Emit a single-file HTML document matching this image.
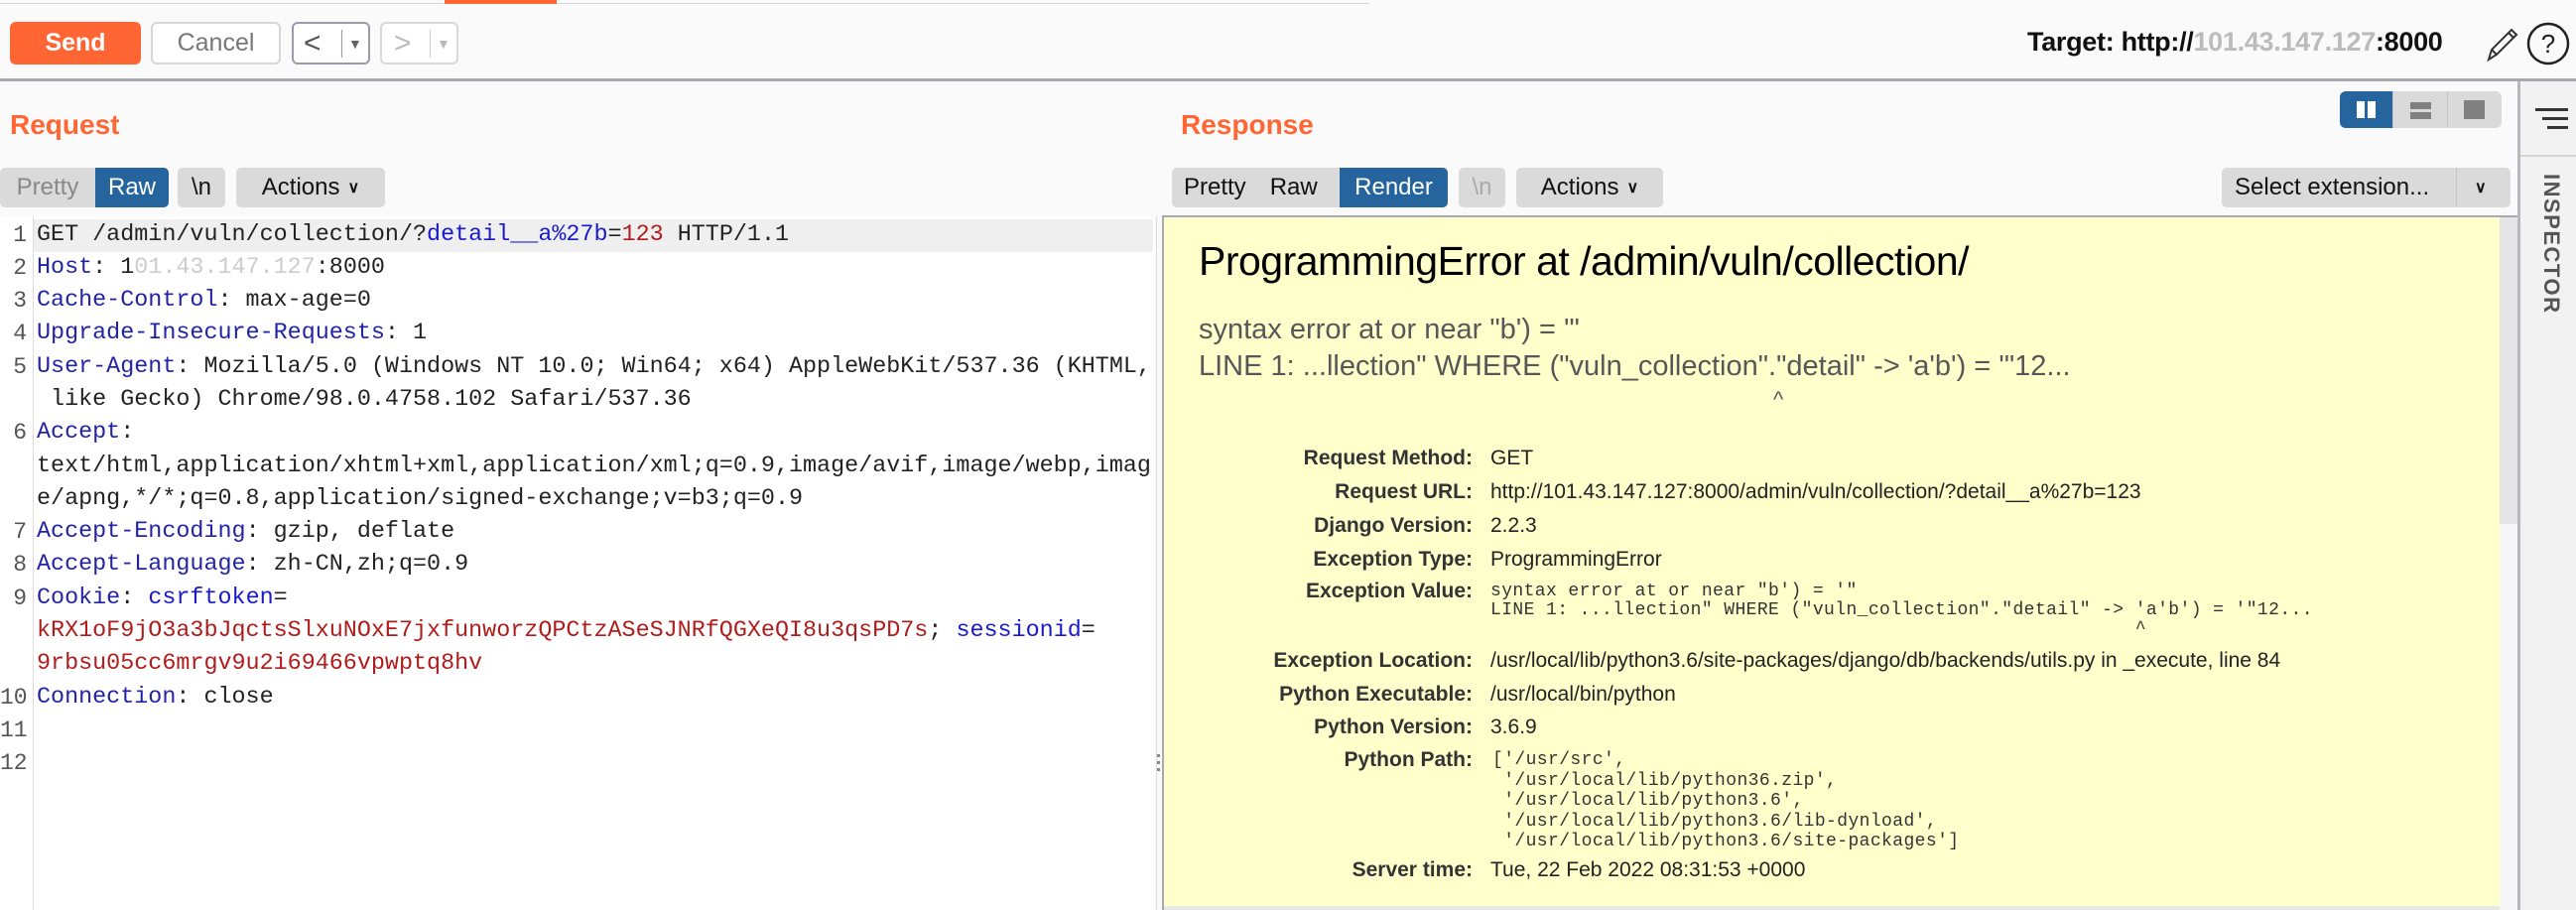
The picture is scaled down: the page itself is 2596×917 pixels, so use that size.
<!DOCTYPE html>
<html><head><meta charset="utf-8"><style>
*{margin:0;padding:0;box-sizing:border-box}
body{width:2596px;height:917px;background:#fafafa;position:relative;overflow:hidden;font-family:"Liberation Sans",Arial,sans-serif}
.a{position:absolute}
.btn{position:absolute;border-radius:6px;display:flex;align-items:center;justify-content:center;font-size:25px}
.tab{position:absolute;top:169px;height:40px;display:flex;align-items:center;font-size:24px;color:#111}
.mono{font-family:"Liberation Mono",monospace;font-size:23.4px;white-space:pre;color:#222}
.ln{position:absolute;left:0;width:33px;text-align:right;padding-right:6px;color:#555;font-family:"Liberation Mono",monospace;font-size:23px}
.k{color:#2323a8}.r{color:#b01c1c}.b{color:#1a1acc}
.row{position:absolute;left:37px;height:33px;line-height:33px}
.lab{position:absolute;width:300px;left:1184px;text-align:right;font-size:21px;color:#333;font-weight:bold}
.val{position:absolute;left:1502px;font-size:21px;color:#222;white-space:pre}
.sm{font-family:"Liberation Mono",monospace;font-size:18px;letter-spacing:0.4px;color:#333;white-space:pre}
</style></head><body>
<div class="a" style="left:0;top:3px;width:1380px;height:1px;background:#d8d8d8"></div>
<div class="a" style="left:448px;top:0;width:113px;height:4px;background:#ff6633"></div>
<div class="btn" style="left:10px;top:22px;width:132px;height:43px;background:#ff6633;color:#fff;font-weight:bold">Send</div>
<div class="btn" style="left:152px;top:22px;width:131px;height:43px;background:#fff;border:2px solid #d6d6d6;color:#777">Cancel</div>
<div class="btn" style="left:294px;top:22px;width:79px;height:43px;background:#fff;border:2px solid #9a9aaa;color:#555;justify-content:flex-start">
 <span style="margin-left:10px;font-size:30px">&lt;</span><span style="position:absolute;left:48px;top:6px;width:1px;height:28px;background:#999"></span><span style="position:absolute;left:55px;font-size:14px;color:#666">▼</span></div>
<div class="btn" style="left:383px;top:22px;width:79px;height:43px;background:#fff;border:2px solid #d8d8d8;color:#bbb;justify-content:flex-start">
 <span style="margin-left:12px;font-size:30px">&gt;</span><span style="position:absolute;left:48px;top:6px;width:1px;height:28px;background:#ccc"></span><span style="position:absolute;left:55px;font-size:14px;color:#bbb">▼</span></div>
<div class="a" style="left:2043px;top:27px;font-size:27px;font-weight:bold;color:#111;white-space:nowrap;letter-spacing:-0.3px">Target: http://<span style="color:#bbb">101.43.147.127</span>:8000</div>
<svg class="a" style="left:2498px;top:22px" width="44" height="44" viewBox="0 0 44 44"><path d="M10 38 L13 28 L33 8 L38 13 L18 33 Z M13 28 L18 33 M30 11 L35 16" fill="none" stroke="#333" stroke-width="2"/></svg>
<svg class="a" style="left:2545px;top:21px" width="46" height="46" viewBox="0 0 46 46"><circle cx="23" cy="23" r="20" fill="none" stroke="#222" stroke-width="2.5"/><text x="23" y="32" font-size="26" text-anchor="middle" font-family="Liberation Sans" fill="#222">?</text></svg>
<div class="a" style="left:0;top:79px;width:2596px;height:3px;background:#a9a7ae"></div>
<div class="a" style="left:2537px;top:82px;width:59px;height:835px;background:#f3f2f3;border-left:3px solid #b9b7bc"></div>
<div class="a" style="left:2540px;top:156px;width:56px;height:2px;background:#d4d4d4"></div>
<div class="a" style="left:2555px;top:109px;width:33px;height:3px;background:#333"></div>
<div class="a" style="left:2562px;top:118px;width:26px;height:3px;background:#333"></div>
<div class="a" style="left:2567px;top:127px;width:21px;height:3px;background:#333"></div>
<div class="a" style="left:2560px;top:175px;width:24px;height:165px"><div style="position:absolute;left:24px;top:0;transform-origin:0 0;transform:rotate(90deg);font-size:22px;font-weight:bold;color:#555;letter-spacing:1.5px;white-space:nowrap">INSPECTOR</div></div>
<div class="a" style="left:10px;top:110px;font-size:28px;font-weight:bold;color:#ff6633">Request</div>
<div class="tab" style="left:0;width:96px;background:#dadada;border-radius:5px 0 0 5px;color:#888;justify-content:center">Pretty</div>
<div class="tab" style="left:96px;width:74px;background:#26649d;color:#fff;border-radius:0 5px 5px 0;justify-content:center">Raw</div>
<div class="tab" style="left:179px;width:48px;background:#dadada;border-radius:5px;justify-content:center">\n</div>
<div class="tab" style="left:238px;width:150px;background:#dadada;border-radius:5px;justify-content:center">Actions <span style="margin-left:8px;font-size:16px;font-weight:bold">&#8744;</span></div>
<div class="a" style="left:0;top:218px;width:1164px;height:699px;background:#fff"></div>
<div class="a" style="left:33px;top:218px;width:1px;height:699px;background:#ddd"></div>
<div class="a" style="left:34px;top:221px;width:1128px;height:33px;background:#efefef"></div>
<div class="ln" style="top:221px;line-height:33px">1</div>
<div class="ln" style="top:254px;line-height:33px">2</div>
<div class="ln" style="top:287px;line-height:33px">3</div>
<div class="ln" style="top:320px;line-height:33px">4</div>
<div class="ln" style="top:354px;line-height:33px">5</div>
<div class="ln" style="top:420px;line-height:33px">6</div>
<div class="ln" style="top:520px;line-height:33px">7</div>
<div class="ln" style="top:553px;line-height:33px">8</div>
<div class="ln" style="top:587px;line-height:33px">9</div>
<div class="ln" style="top:687px;line-height:33px">10</div>
<div class="ln" style="top:720px;line-height:33px">11</div>
<div class="ln" style="top:753px;line-height:33px">12</div>
<div class="mono row" style="top:221px">GET /admin/vuln/collection/?<span class="b">detail__a%27b</span>=<span class="r">123</span> HTTP/1.1</div>
<div class="mono row" style="top:254px"><span class="k">Host</span>: 1<span style="color:#ccc">01.43.147.127</span>:8000</div>
<div class="mono row" style="top:287px"><span class="k">Cache-Control</span>: max-age=0</div>
<div class="mono row" style="top:320px"><span class="k">Upgrade-Insecure-Requests</span>: 1</div>
<div class="mono row" style="top:354px"><span class="k">User-Agent</span>: Mozilla/5.0 (Windows NT 10.0; Win64; x64) AppleWebKit/537.36 (KHTML,</div>
<div class="mono row" style="top:387px"> like Gecko) Chrome/98.0.4758.102 Safari/537.36</div>
<div class="mono row" style="top:420px"><span class="k">Accept</span>:</div>
<div class="mono row" style="top:454px">text/html,application/xhtml+xml,application/xml;q=0.9,image/avif,image/webp,imag</div>
<div class="mono row" style="top:487px">e/apng,*/*;q=0.8,application/signed-exchange;v=b3;q=0.9</div>
<div class="mono row" style="top:520px"><span class="k">Accept-Encoding</span>: gzip, deflate</div>
<div class="mono row" style="top:553px"><span class="k">Accept-Language</span>: zh-CN,zh;q=0.9</div>
<div class="mono row" style="top:587px"><span class="k">Cookie</span>: <span class="b">csrftoken</span>=</div>
<div class="mono row" style="top:620px"><span class="r">kRX1oF9jO3a3bJqctsSlxuNOxE7jxfunworzQPCtzASeSJNRfQGXeQI8u3qsPD7s</span>; <span class="b">sessionid</span>=</div>
<div class="mono row" style="top:653px"><span class="r">9rbsu05cc6mrgv9u2i69466vpwptq8hv</span></div>
<div class="mono row" style="top:687px"><span class="k">Connection</span>: close</div>
<div class="a" style="left:1165px;top:218px;width:1px;height:699px;background:#ddd"></div>
<div class="a" style="left:1166px;top:760px;width:3px;height:3px;background:#888;box-shadow:0 7px 0 #888,0 14px 0 #888"></div>
<div class="a" style="left:1190px;top:110px;font-size:28px;font-weight:bold;color:#ff6633">Response</div>
<div class="a" style="left:2358px;top:92px;width:163px;height:37px;background:#dadada;border-radius:6px"></div>
<div class="a" style="left:2358px;top:92px;width:53px;height:37px;background:#26649d;border-radius:6px 0 0 6px"></div>
<div class="a" style="left:2375px;top:102px;width:8px;height:17px;background:#fff"></div>
<div class="a" style="left:2386px;top:102px;width:8px;height:17px;background:#fff"></div>
<div class="a" style="left:2411px;top:92px;width:1px;height:37px;background:#c4c4c4"></div>
<div class="a" style="left:2429px;top:103px;width:21px;height:7px;background:#808080"></div>
<div class="a" style="left:2429px;top:113px;width:21px;height:7px;background:#808080"></div>
<div class="a" style="left:2466px;top:92px;width:1px;height:37px;background:#c4c4c4"></div>
<div class="a" style="left:2483px;top:101px;width:21px;height:19px;background:#808080"></div>
<div class="tab" style="left:1181px;width:169px;background:#dadada;border-radius:5px 0 0 5px"><span style="margin-left:12px">Pretty</span><span style="margin-left:24px">Raw</span></div>
<div class="tab" style="left:1350px;width:109px;background:#26649d;color:#fff;border-radius:0 5px 5px 0;justify-content:center">Render</div>
<div class="tab" style="left:1470px;width:47px;background:#dadada;border-radius:5px;color:#aaa;justify-content:center">\n</div>
<div class="tab" style="left:1528px;width:148px;background:#dadada;border-radius:5px;justify-content:center">Actions <span style="margin-left:8px;font-size:16px;font-weight:bold">&#8744;</span></div>
<div class="tab" style="left:2239px;width:291px;background:#dadada;border-radius:5px"><span style="margin-left:13px">Select extension...</span><span style="position:absolute;left:236px;top:0;width:1px;height:40px;background:#c4c4c4"></span><span style="position:absolute;left:255px;font-size:16px;font-weight:bold">&#8744;</span></div>
<div class="a" style="left:1171px;top:217px;width:1366px;height:700px;background:#e8e8e8;border-left:2px solid #a9a9b3;border-top:2px solid #a9a9b3"></div>
<div class="a" style="left:1173px;top:219px;width:1346px;height:694px;background:#ffffcc"></div>
<div class="a" style="left:2519px;top:219px;width:18px;height:309px;background:#e5e5e5"></div>
<div class="a" style="left:2519px;top:528px;width:18px;height:389px;background:#f6f6f6"></div>
<div class="a" style="left:1208px;top:240px;font-size:41px;color:#000;white-space:nowrap;letter-spacing:-0.5px">ProgrammingError at /admin/vuln/collection/</div>
<div class="a" style="left:1208px;top:314px;font-size:29px;color:#575757;white-space:pre;line-height:37px">syntax error at or near "b') = '"
LINE 1: ...llection" WHERE ("vuln_collection"."detail" -&gt; 'a'b') = '"12...</div>
<div class="a" style="left:1787px;top:390px;font-size:22px;color:#575757">^</div>
<div class="lab" style="top:450px">Request Method:</div><div class="val" style="top:450px">GET</div>
<div class="lab" style="top:484px">Request URL:</div><div class="val" style="top:484px">http://101.43.147.127:8000/admin/vuln/collection/?detail__a%27b=123</div>
<div class="lab" style="top:518px">Django Version:</div><div class="val" style="top:518px">2.2.3</div>
<div class="lab" style="top:552px">Exception Type:</div><div class="val" style="top:552px">ProgrammingError</div>
<div class="lab" style="top:584px">Exception Value:</div>
<div class="a sm" style="left:1502px;top:587px;line-height:19px">syntax error at or near "b') = '"
LINE 1: ...llection" WHERE ("vuln_collection"."detail" -&gt; 'a'b') = '"12...
                                                          ^</div>
<div class="lab" style="top:654px">Exception Location:</div><div class="val" style="top:654px">/usr/local/lib/python3.6/site-packages/django/db/backends/utils.py in _execute, line 84</div>
<div class="lab" style="top:688px">Python Executable:</div><div class="val" style="top:688px">/usr/local/bin/python</div>
<div class="lab" style="top:721px">Python Version:</div><div class="val" style="top:721px">3.6.9</div>
<div class="lab" style="top:754px">Python Path:</div>
<div class="a sm" style="left:1504px;top:756px;line-height:20.5px">['/usr/src',
 '/usr/local/lib/python36.zip',
 '/usr/local/lib/python3.6',
 '/usr/local/lib/python3.6/lib-dynload',
 '/usr/local/lib/python3.6/site-packages']</div>
<div class="lab" style="top:865px">Server time:</div><div class="val" style="top:865px">Tue, 22 Feb 2022 08:31:53 +0000</div>
</body></html>
